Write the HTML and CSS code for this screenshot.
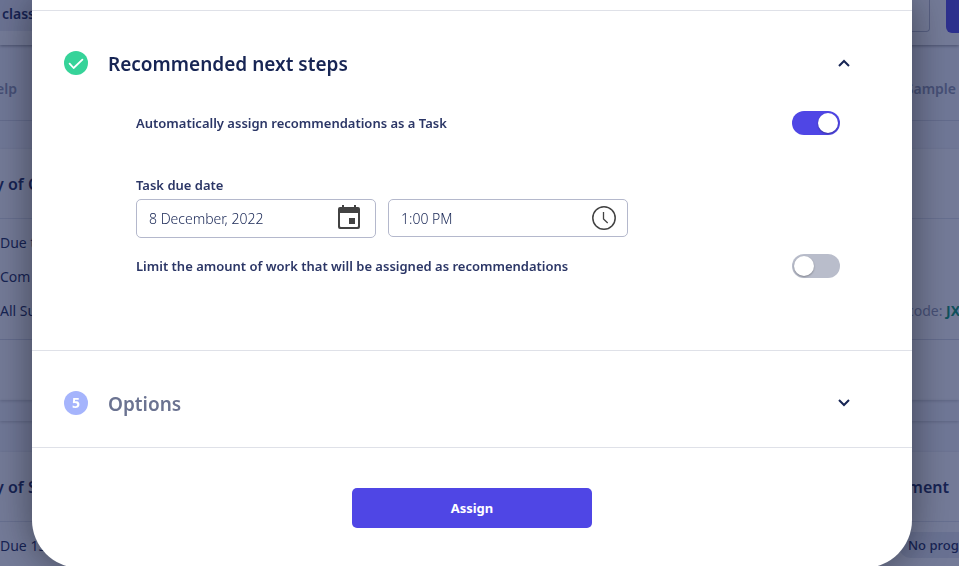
FILE: index.html
```
<!DOCTYPE html>
<html lang="en">
<head>
    <meta charset="UTF-8">
    <meta name="viewport" content="width=device-width, initial-scale=1.0">
    <title>Assign</title>
    <link rel="stylesheet" href="styles.css">
</head>
<body>
    <div class="page">
        <header class="topbar">
            <div class="class-picker">class</div>
            <div class="topbar-actions">
                <div class="search-box"></div>
                <div class="primary-box"></div>
            </div>
        </header>
        <nav class="subnav">
            <span>elp</span>
            <span>Sample</span>
        </nav>
        <main class="cards">
            <section class="card">
                <h3 class="card-title"><span>y of C</span></h3>
                <div class="card-body">
                    <div class="card-row"><span>Due t</span></div>
                    <div class="card-row"><span>Com</span></div>
                    <div class="card-row"><span>All Su</span><span class="code">code: <b>JX</b></span></div>
                </div>
                <div class="card-footer"></div>
            </section>
            <div class="card-spacer"></div>
        </main>
        <section class="card card-next">
            <h3 class="card-title"><span>y of S</span><span>ment</span></h3>
            <div class="card-row"><span>Due 13</span><span class="badge">No prog</span></div>
        </section>
    </div>

    <div class="overlay">
        <div class="modal" role="dialog" aria-label="Assign">
            <section class="step">
                <div class="step-header">
                    <svg class="step-icon" viewBox="0 0 24 24">
                        <circle cx="12" cy="12" r="12" fill="#36d399"/>
                        <path d="M5.6 12.6l4 4.4 8.8-8.4" fill="none" stroke="#fff" stroke-width="1.8" stroke-linecap="round" stroke-linejoin="round"/>
                    </svg>
                    <h2>Recommended next steps</h2>
                    <button class="chevron" type="button" aria-label="Collapse">
                        <svg viewBox="0 0 24 24"><path d="M7 15l5-5 5 5"/></svg>
                    </button>
                </div>
                <div class="step-body">
                    <div class="toggle-row">
                        <label for="auto_assign">Automatically assign recommendations as a Task</label>
                        <input class="toggle" type="checkbox" id="auto_assign" checked>
                    </div>
                    <div class="due">
                        <label for="due_date">Task due date</label>
                        <div class="due-fields">
                            <div class="field field-date">
                                <input type="text" id="due_date" value="8 December, 2022">
                                <svg viewBox="0 0 24 24">
                                    <path fill="#424242" fill-rule="evenodd" d="M5 0h2v2h10V0h2v2h2a2 2 0 0 1 2 2v18a2 2 0 0 1-2 2H3a2 2 0 0 1-2-2V4a2 2 0 0 1 2-2h2zM3 8v13a1 1 0 0 0 1 1h16a1 1 0 0 0 1-1V8zM12 13h6v6h-6z"/>
                                </svg>
                            </div>
                            <div class="field">
                                <input type="text" id="due_time" value="1:00 PM" aria-label="Task due time">
                                <svg viewBox="0 0 24 24">
                                    <circle cx="12" cy="12" r="11.2" fill="none" stroke="#424242" stroke-width="1.5"/>
                                    <path d="M11.5 6v7l4.2 4" fill="none" stroke="#424242" stroke-width="1.3"/>
                                </svg>
                            </div>
                        </div>
                    </div>
                    <div class="toggle-row">
                        <label for="limit_work">Limit the amount of work that will be assigned as recommendations</label>
                        <input class="toggle" type="checkbox" id="limit_work">
                    </div>
                </div>
            </section>
            <section class="step">
                <div class="step-header">
                    <span class="step-number">5</span>
                    <h2 class="inactive">Options</h2>
                    <button class="chevron" type="button" aria-label="Expand">
                        <svg viewBox="0 0 24 24"><path d="M7 9l5 5 5-5"/></svg>
                    </button>
                </div>
            </section>
            <div class="modal-footer">
                <button class="assign" type="button">Assign</button>
            </div>
        </div>
    </div>
</body>
</html>
```
FILE: styles.css
```
* {
    box-sizing: border-box;
}
body {
    margin: 0;
    height: 100vh;
    overflow: hidden;
    background-color: #f5f6fb;
    color: #172554;
    font-family: "Noto Sans", "Open Sans", sans-serif;
    font-size: 14px;
}
h2, h3 {
    margin: 0;
}

/* page behind the modal */
.page {
    white-space: nowrap;
}
.topbar {
    display: flex;
    justify-content: space-between;
    align-items: flex-start;
    height: 45px;
    background-color: #fff;
    box-shadow: 0 1px 3px rgba(0, 0, 0, 0.4);
}
.class-picker {
    width: 120px;
    height: 31px;
    padding: 4px 2px;
    background-color: #e9ebf3;
    font-weight: 600;
    line-height: 20px;
}
.topbar-actions {
    display: flex;
    gap: 16px;
}
.search-box {
    width: 120px;
    height: 32px;
    border: 1px solid #b8bccb;
    border-top: none;
    border-radius: 0 0 4px 4px;
}
.primary-box {
    width: 13px;
    height: 33px;
    background-color: #4f46e5;
    border-radius: 0 0 0 6px;
}
.subnav {
    display: flex;
    justify-content: space-between;
    align-items: center;
    height: 76px;
    padding: 12px 3px 0 0;
    border-bottom: 1px solid #d5d8e3;
    color: #8d93ab;
    font-weight: 600;
    text-indent: -4px;
}
.cards {
    padding-top: 28px;
}
.card {
    background-color: #fff;
    box-shadow: 0 1px 3px rgba(0, 0, 0, 0.2);
}
.card-spacer {
    height: 21px;
    box-shadow: 0 1px 3px rgba(0, 0, 0, 0.2);
}
.card-next {
    margin-top: 31px;
}
.card-title {
    display: flex;
    justify-content: space-between;
    align-items: center;
    height: 70px;
    padding-right: 10px;
    border-bottom: 1px solid #dfe2ea;
    font-size: 16px;
    font-weight: 600;
    text-indent: -5px;
}
.card-body {
    padding: 6px 0 12px;
}
.card-row {
    display: flex;
    justify-content: space-between;
    align-items: center;
    height: 34px;
}
.card-next .card-row {
    height: 46px;
}
.code {
    width: 52px;
    color: #8d93ab;
}
.code b {
    color: #059669;
}
.badge {
    width: 60px;
    padding: 4px 9px;
    background-color: #e4e7ef;
    border-radius: 12px 0 0 12px;
    font-size: 13px;
    font-weight: 500;
}
.card-footer {
    height: 61px;
    border-top: 1px solid #d5d8e3;
}

/* modal */
.overlay {
    position: fixed;
    inset: 0;
    padding: 0 47px 0 32px;
    overflow: hidden;
    background-color: rgba(23, 35, 84, 0.6);
}
.modal {
    padding-top: 10px;
    background-color: #fff;
    border-radius: 0 0 48px 48px;
    box-shadow: 0 0 40px rgba(0, 0, 0, 0.45);
}
.step {
    padding: 40px 56px 0 32px;
    border-top: 1px solid #dfe1e8;
}
.step-header {
    display: flex;
    align-items: center;
    gap: 20px;
    height: 24px;
}
.step-header h2 {
    flex: 1;
    padding-top: 2px;
    font-size: 19px;
    font-weight: 600;
    line-height: 24px;
}
.step-header .inactive {
    color: #6b7391;
}
.step-icon, .step-number {
    width: 24px;
    height: 24px;
}
.step-number {
    border-radius: 50%;
    background-color: #a5b4fc;
    color: #fff;
    font-weight: 700;
    line-height: 24px;
    text-align: center;
}
.chevron {
    width: 24px;
    height: 24px;
    padding: 0;
    border: none;
    background: none;
    cursor: pointer;
}
.chevron svg {
    display: block;
    fill: none;
    stroke: #172554;
    stroke-width: 2;
}
.step-body {
    padding: 36px 16px 72px 72px;
}
.step:nth-child(2) {
    padding-bottom: 32px;
}
.toggle-row {
    display: flex;
    justify-content: space-between;
    align-items: center;
}
.step-body label {
    color: #2b3666;
    font-size: 13px;
    font-weight: 600;
    line-height: 20px;
}
.toggle {
    appearance: none;
    display: flex;
    width: 48px;
    height: 24px;
    margin: 0;
    padding: 2px;
    border-radius: 12px;
    background-color: #b9bdcb;
    cursor: pointer;
}
.toggle::before {
    content: "";
    width: 20px;
    height: 20px;
    border-radius: 50%;
    background-color: #fff;
    box-shadow: 0 1px 2px rgba(0, 0, 0, 0.3);
}
.toggle:checked {
    justify-content: flex-end;
    background-color: #4f46e5;
}
.due {
    padding: 40px 0 16px;
}
.due label {
    display: block;
    margin-bottom: 4px;
}
.due-fields {
    display: flex;
    align-items: flex-start;
    gap: 12px;
}
.field {
    display: flex;
    align-items: center;
    width: 240px;
    height: 38px;
    padding: 0 11px 0 12px;
    border: 1px solid #b4b8cc;
    border-radius: 5px;
}
.field-date {
    height: 39px;
    padding-right: 14px;
}
.field input {
    flex: 1;
    min-width: 0;
    padding: 0;
    border: none;
    outline: none;
    background: none;
    color: #172554;
    font-family: inherit;
    font-size: 14px;
    font-weight: 300;
}
.field svg {
    width: 24px;
    height: 24px;
}
.field-date svg {
    margin-bottom: 4px;
}
.modal-footer {
    display: flex;
    justify-content: center;
    padding: 40px;
    border-top: 1px solid #dfe1e8;
}
.assign {
    width: 240px;
    height: 40px;
    border: none;
    border-radius: 5px;
    background-color: #4f46e5;
    color: #fff;
    font-family: inherit;
    font-size: 13px;
    font-weight: 700;
    cursor: pointer;
}
```
